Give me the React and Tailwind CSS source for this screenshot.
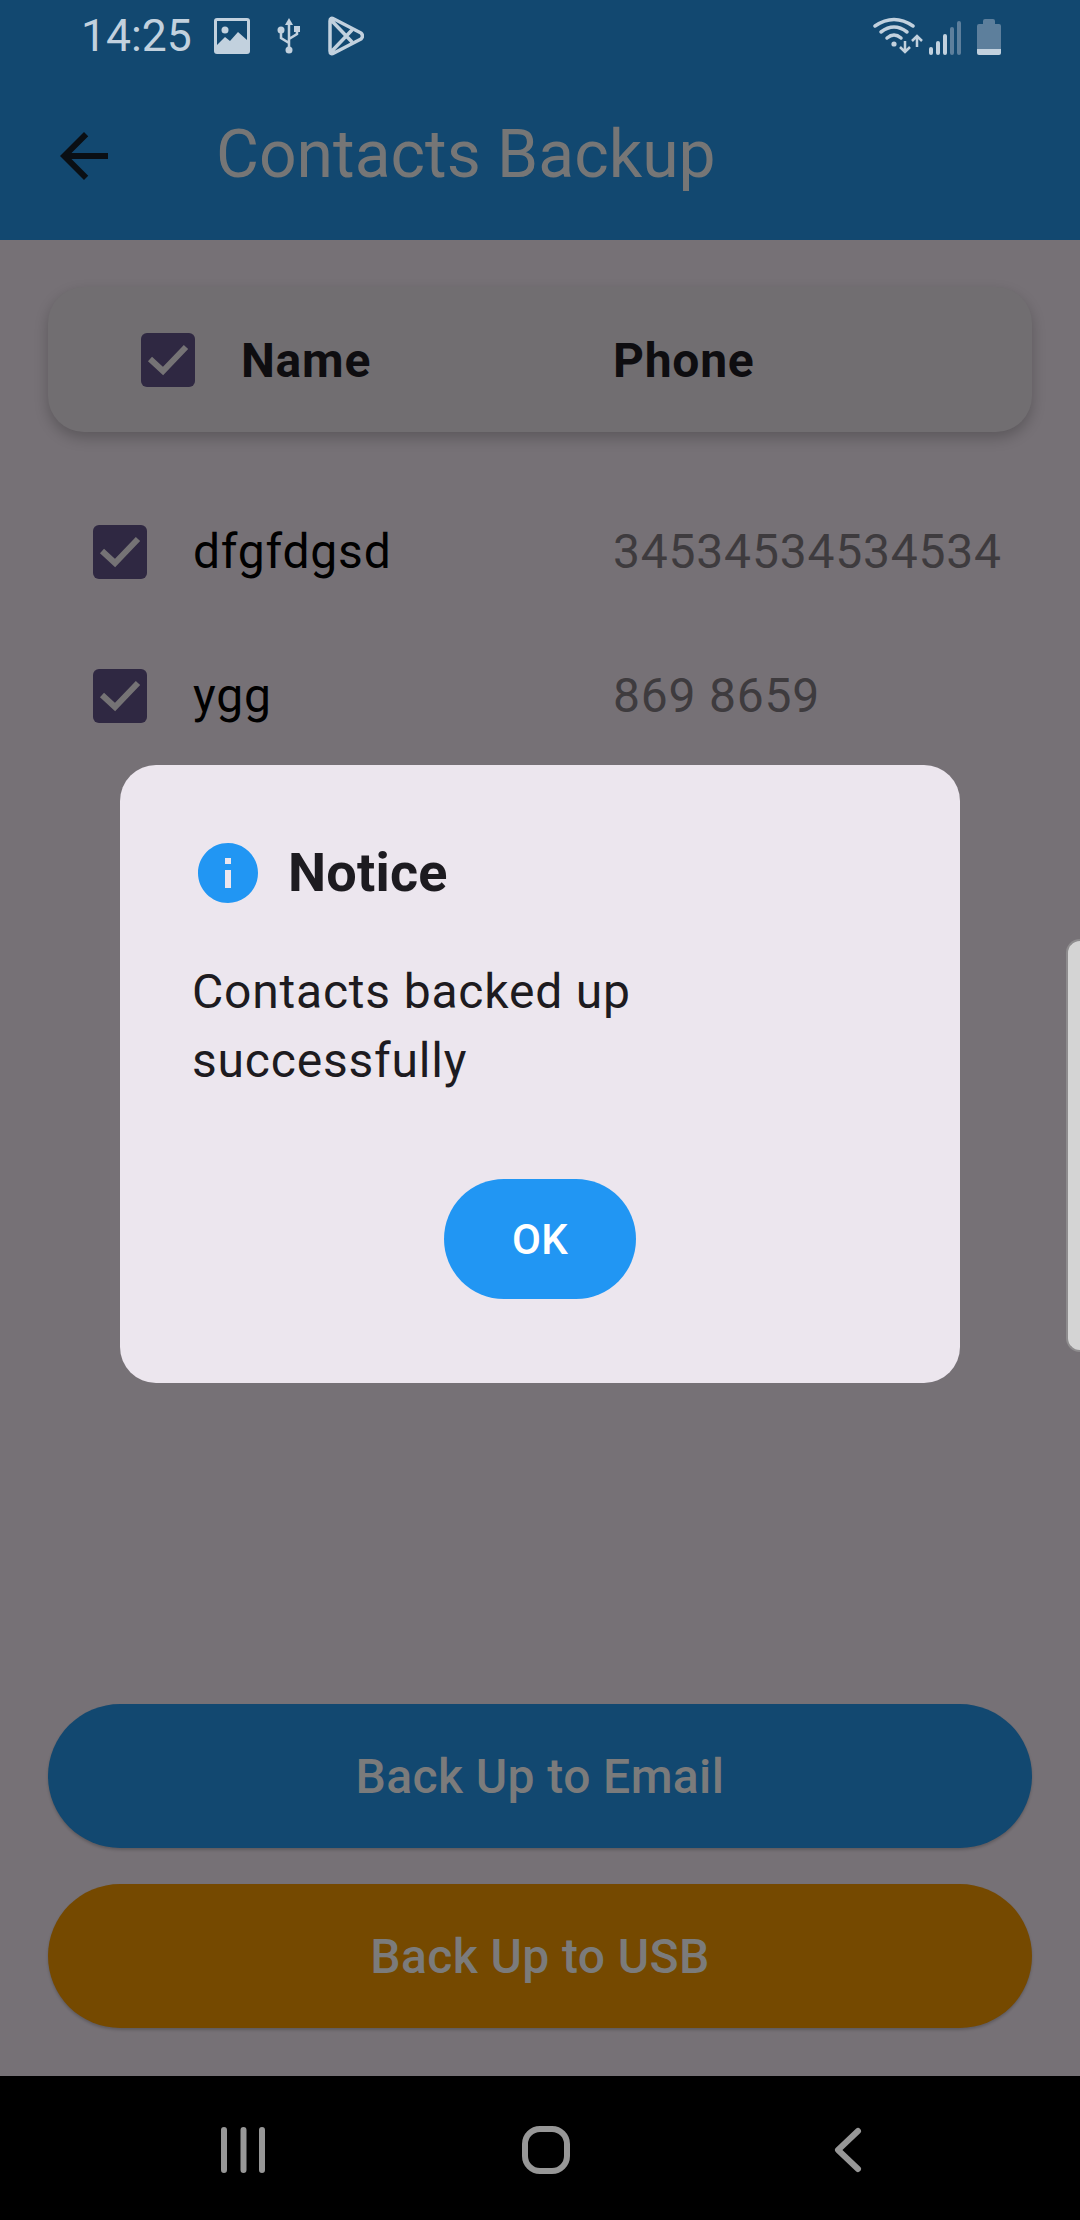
const FONT = { fontFamily: "Roboto, sans-serif" };

function Check() {
  return (
    <div className="w-[54px] h-[54px] shrink-0 rounded-[6px] bg-[#2f2842]">
      <svg width="54" height="54" viewBox="0 0 54 54" fill="none">
        <polyline points="9,26 22,38 45,14" stroke="#757375" strokeWidth="6" />
      </svg>
    </div>
  );
}

function ImageIcon() {
  return (
    <svg width="36" height="36" viewBox="0 0 36 36" className="mr-[27px]">
      <rect x="0" y="0" width="36" height="36" rx="3" fill="#c2d1de" />
      <rect x="3" y="3" width="30" height="26" fill="#124870" />
      <circle cx="11" cy="12" r="3.5" fill="#c2d1de" />
      <path d="M3 27 L11 19 L16 23 L24 14 L33 22 L33 30 L3 30 Z" fill="#c2d1de" />
    </svg>
  );
}

function UsbIcon() {
  return (
    <svg width="24" height="36" viewBox="0 0 24 36" className="mr-[27px]" fill="none">
      <path d="M12 4 V31 M12 25 L4 20 V13 M12 21 L20 16 V11" stroke="#c2d1de" strokeWidth="2.5" />
      <path d="M12 0 L16 7 H8 Z" fill="#c2d1de" />
      <circle cx="4" cy="12" r="3.5" fill="#c2d1de" />
      <rect x="17" y="8" width="6" height="6" fill="#c2d1de" />
      <circle cx="12" cy="32" r="3.5" fill="#c2d1de" />
    </svg>
  );
}

function PlayIcon() {
  return (
    <svg width="36" height="40" viewBox="0 0 36 40" fill="none">
      <path
        d="M2 5 Q2 1 6 3 L33 17 Q36 20 33 23 L6 37 Q2 39 2 35 Z M3 4 L24 26 M3 36 L24 14"
        stroke="#c2d1de"
        strokeWidth="3.5"
        strokeLinejoin="round"
      />
    </svg>
  );
}

function WifiIcon() {
  return (
    <svg width="50" height="38" viewBox="0 0 50 38" fill="none">
      <path d="M2 9 Q21 -4 40 9" stroke="#c2d1de" strokeWidth="3.5" strokeLinecap="round" />
      <path d="M8 15 Q21 5 34 15" stroke="#c2d1de" strokeWidth="3.5" strokeLinecap="round" />
      <path d="M14 21 Q21 15 28 21" stroke="#c2d1de" strokeWidth="3.5" strokeLinecap="round" />
      <circle cx="21" cy="27" r="2.6" fill="#c2d1de" />
      <path d="M32 24 V34 M27 30 L32 35 L37 30" stroke="#c2d1de" strokeWidth="2.5" />
      <path d="M44 30 V20 M39 24 L44 19 L49 24" stroke="#c2d1de" strokeWidth="2.5" />
    </svg>
  );
}

function SignalIcon() {
  const bars = [
    { x: 0, h: 8, c: "#c2d1de" },
    { x: 7, h: 14, c: "#c2d1de" },
    { x: 14, h: 21, c: "#c2d1de" },
    { x: 21, h: 28, c: "#5d7f9c" },
    { x: 28, h: 34, c: "#5d7f9c" },
  ];
  return (
    <svg width="32" height="34" viewBox="0 0 32 34">
      {bars.map((b) => (
        <rect key={b.x} x={b.x} y={34 - b.h} width="4" height={b.h} rx="2" fill={b.c} />
      ))}
    </svg>
  );
}

function BatteryIcon() {
  return (
    <svg width="24" height="36" viewBox="0 0 24 36">
      <path d="M6 5 V2 Q6 0 8 0 H16 Q18 0 18 2 V5 H22 Q24 5 24 7 V30 H0 V7 Q0 5 2 5 Z" fill="#5d7f9c" />
      <path d="M0 30 H24 V34 Q24 36 22 36 H2 Q0 36 0 34 Z" fill="#c2d1de" />
    </svg>
  );
}

function StatusBar() {
  return (
    <div className="h-[72px] flex items-center pl-[81px] pr-[79px]">
      <span className="text-[44.500px] leading-none text-[#c2d1de] mr-[22px]">14:25</span>
      <ImageIcon />
      <UsbIcon />
      <PlayIcon />
      <div className="ml-auto flex items-end gap-[16px]">
        <div className="flex items-end gap-[6px]">
          <WifiIcon />
          <SignalIcon />
        </div>
        <BatteryIcon />
      </div>
    </div>
  );
}

function Row({ name, phone }) {
  return (
    <div className="h-[144px] flex items-center pl-[45px]">
      <Check />
      <div className="ml-[46px] w-[420px] text-[48px] tracking-[0.8px] text-black">{name}</div>
      <div className="text-[48px] tracking-[0.8px] text-[#3e3b3e] whitespace-nowrap">{phone}</div>
    </div>
  );
}

function Notice() {
  return (
    <div className="absolute left-[120px] top-[765px] w-[840px] h-[618px] rounded-[36px] bg-[#ece6ee] p-[72px] pb-[84px]">
      <div className="flex items-center h-[72px]">
        <svg width="72" height="72" viewBox="0 0 24 24" fill="#2196f3">
          <path d="M12 2C6.48 2 2 6.48 2 12s4.48 10 10 10 10-4.48 10-10S17.52 2 12 2zm1 15h-2v-6h2v6zm0-8h-2V7h2v2z" />
        </svg>
        <span className="ml-[24px] pb-[2px] text-[54px] font-bold tracking-[0.2px] text-[#1d1b20]">Notice</span>
      </div>
      <p className="mt-[48px] text-[48px] leading-[69px] tracking-[0.8px] text-[#1d1b20]">
        Contacts backed up successfully
      </p>
      <div className="mt-[84px] flex justify-center">
        <button className="w-[192px] h-[120px] rounded-full bg-[#2196f3] text-white text-[42px] font-medium tracking-[0.3px]">
          OK
        </button>
      </div>
    </div>
  );
}

function BigButton({ className, children }) {
  return (
    <button
      className={
        "w-full h-[144px] pt-[2px] rounded-full text-[48px] font-medium tracking-[0.4px] text-[#7b7b7b] shadow-[0_2px_3px_rgba(0,0,0,0.2)] " +
        className
      }
    >
      {children}
    </button>
  );
}

export default function App() {
  return (
    <div className="relative w-[1080px] h-[2220px] overflow-hidden flex flex-col bg-[#767176]" style={FONT}>
      <header className="h-[240px] bg-[#124870]">
        <StatusBar />
        <div className="h-[168px] flex items-center pl-[48px]">
          <svg width="72" height="72" viewBox="0 0 24 24" fill="#0a0f14">
            <path d="M20 11H7.83l5.59-5.59L12 4l-8 8 8 8 1.41-1.41L7.83 13H20v-2z" />
          </svg>
          <h1 className="ml-[96px] pb-[4px] text-[66px] text-[#767676]">Contacts Backup</h1>
        </div>
      </header>

      <main className="flex-1 flex flex-col px-[48px] pt-[47px]">
        <div className="h-[145px] rounded-[36px] bg-[#716e71] shadow-[0_6px_14px_rgba(0,0,0,0.22)] flex items-center pl-[93px]">
          <Check />
          <div className="ml-[46px] w-[372px] pt-[2px] text-[48px] font-bold tracking-[0.75px] text-[#0e0d10]">Name</div>
          <div className="pt-[2px] text-[48px] font-bold tracking-[0.75px] text-[#0e0d10]">Phone</div>
        </div>
        <div className="mt-[48px]">
          <Row name="dfgfdgsd" phone="34534534534534" />
          <Row name="ygg" phone="869 8659" />
        </div>
        <div className="mt-auto flex flex-col gap-[36px] pb-[48px]">
          <BigButton className="bg-[#124870]">Back Up to Email</BigButton>
          <BigButton className="bg-[#754900]">Back Up to USB</BigButton>
        </div>
      </main>

      <nav className="h-[144px] bg-black">
        <svg width="1080" height="144" viewBox="0 0 1080 144" fill="none" stroke="#979797" strokeLinecap="round">
          <path d="M224 54 V94 M243.500 54 V94 M262 54 V94" strokeWidth="6" />
          <rect x="525" y="53" width="42" height="42" rx="15" strokeWidth="6" />
          <path d="M858 55 L838 74 L858 93" strokeWidth="6" strokeLinejoin="round" />
        </svg>
      </nav>

      <Notice />
      <div className="absolute right-0 top-[939px] w-[14px] h-[413px] rounded-l-[16px] bg-[#d4d4d4] border-l-2 border-y-2 border-[#8e8c8e]" />
    </div>
  );
}
